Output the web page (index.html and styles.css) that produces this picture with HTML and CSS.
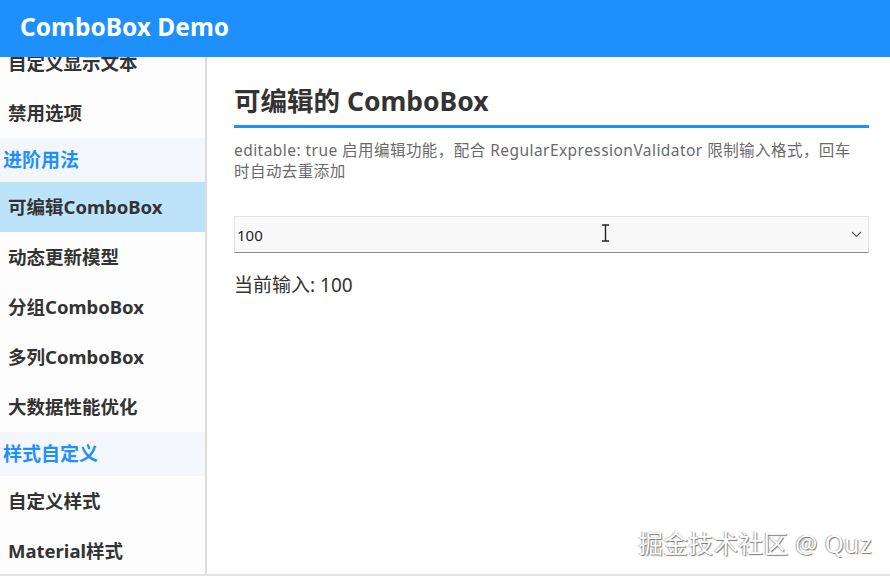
FILE: index.html
```html
<!DOCTYPE html>
<html lang="zh-CN">
<head>
    <meta charset="UTF-8">
    <meta name="viewport" content="width=device-width, initial-scale=1.0">
    <title>ComboBox Demo</title>
    <link rel="stylesheet" href="styles.css">
</head>
<body>
<div class="app">
    <header class="topbar">ComboBox Demo</header>

    <div class="layout">
        <nav class="sidebar">
            <ul class="menu">
                <li class="item">自定义显示文本</li>
                <li class="item">禁用选项</li>
                <li class="section">进阶用法</li>
                <li class="item active">可编辑ComboBox</li>
                <li class="item">动态更新模型</li>
                <li class="item">分组ComboBox</li>
                <li class="item">多列ComboBox</li>
                <li class="item">大数据性能优化</li>
                <li class="section">样式自定义</li>
                <li class="item">自定义样式</li>
                <li class="item">Material样式</li>
            </ul>
        </nav>

        <main class="content">
            <h1 class="page-title">可编辑的 ComboBox</h1>
            <p class="desc">editable: true 启用编辑功能，配合 RegularExpressionValidator 限制输入格式，回车时自动去重添加</p>

            <div class="combo">
                <span class="combo-text">100</span>
                <svg class="chevron" width="11" height="7" viewBox="0 0 11 7">
                    <path d="M1 1 L5.5 5.5 L10 1" fill="none" stroke="#555" stroke-width="1.1"/>
                </svg>
                <svg class="ibeam" width="9" height="18" viewBox="0 0 9 18">
                    <path d="M1 1 H8 M4.5 1 V17 M1 17 H8" fill="none" stroke="#222" stroke-width="1.4"/>
                </svg>
            </div>

            <p class="current">当前输入: 100</p>
        </main>
    </div>

    <div class="watermark">掘金技术社区 @ Quz</div>
</div>
</body>
</html>
```

FILE: styles.css
```css
* {
    box-sizing: border-box;
}
body {
    margin: 0;
    font-family: "Noto Sans", "Noto Sans CJK SC", sans-serif;
    background: #fff;
    color: #333;
    overflow: hidden;
}
.app {
    position: relative;
    height: 576px;
    display: flex;
    flex-direction: column;
    border-bottom: 2px solid #e2e2e2;
}
.topbar {
    height: 57px;
    flex: none;
    background: #1e90fd;
    color: #fff;
    font-size: 24.5px;
    font-weight: bold;
    line-height: 53px;
    padding-left: 20px;
}
.layout {
    flex: 1;
    display: flex;
    min-height: 0;
}

/* left navigation, scrolled a little */
.sidebar {
    width: 207px;
    flex: none;
    border-right: 2px solid #dcdcdc;
    background: #fdfdfd;
    overflow: hidden;
}
.menu {
    list-style: none;
    margin: -19px 0 0 0;
    padding: 0;
}
.item {
    height: 50px;
    line-height: 50px;
    padding-left: 8px;
    font-size: 18.5px;
    font-weight: bold;
    color: #333;
    white-space: nowrap;
}
.item.active {
    background: #bde3fb;
}
.section {
    height: 44px;
    line-height: 44px;
    padding-left: 3px;
    font-size: 19px;
    font-weight: bold;
    color: #1e90fd;
    background: #f3f6fa;
}

/* page body */
.content {
    flex: 1;
    padding: 24px 21px 0 27px;
}
.page-title {
    margin: 0;
    font-size: 26.5px;
    line-height: 40px;
    font-weight: bold;
    color: #333;
    padding-bottom: 4px;
    border-bottom: 3px solid #1e90fd;
}
.desc {
    margin: 12px 0 0 0;
    padding-right: 10px;
    font-size: 15.5px;
    line-height: 21px;
    letter-spacing: 0.45px;
    color: #6a6a6a;
}
.combo {
    position: relative;
    margin-top: 34px;
    height: 37px;
    display: flex;
    align-items: center;
    justify-content: space-between;
    background: #f9f9f9;
    border: 1px solid #e4e4e4;
    border-bottom: 1px solid #8a8a8a;
    padding: 0 6px 0 2px;
}
.combo-text {
    font-size: 15px;
    color: #222;
}
.ibeam {
    position: absolute;
    left: 366px;
    top: 7px;
}
.current {
    margin: 19px 0 0 0;
    font-size: 19px;
    line-height: 26px;
    color: #333;
}
.watermark {
    position: absolute;
    right: 18px;
    bottom: 14px;
    font-size: 24.5px;
    color: #fff;
    text-shadow: 1px 1px 1px #777, -1px 0 1px #aaa;
    letter-spacing: 0.5px;
}
```
